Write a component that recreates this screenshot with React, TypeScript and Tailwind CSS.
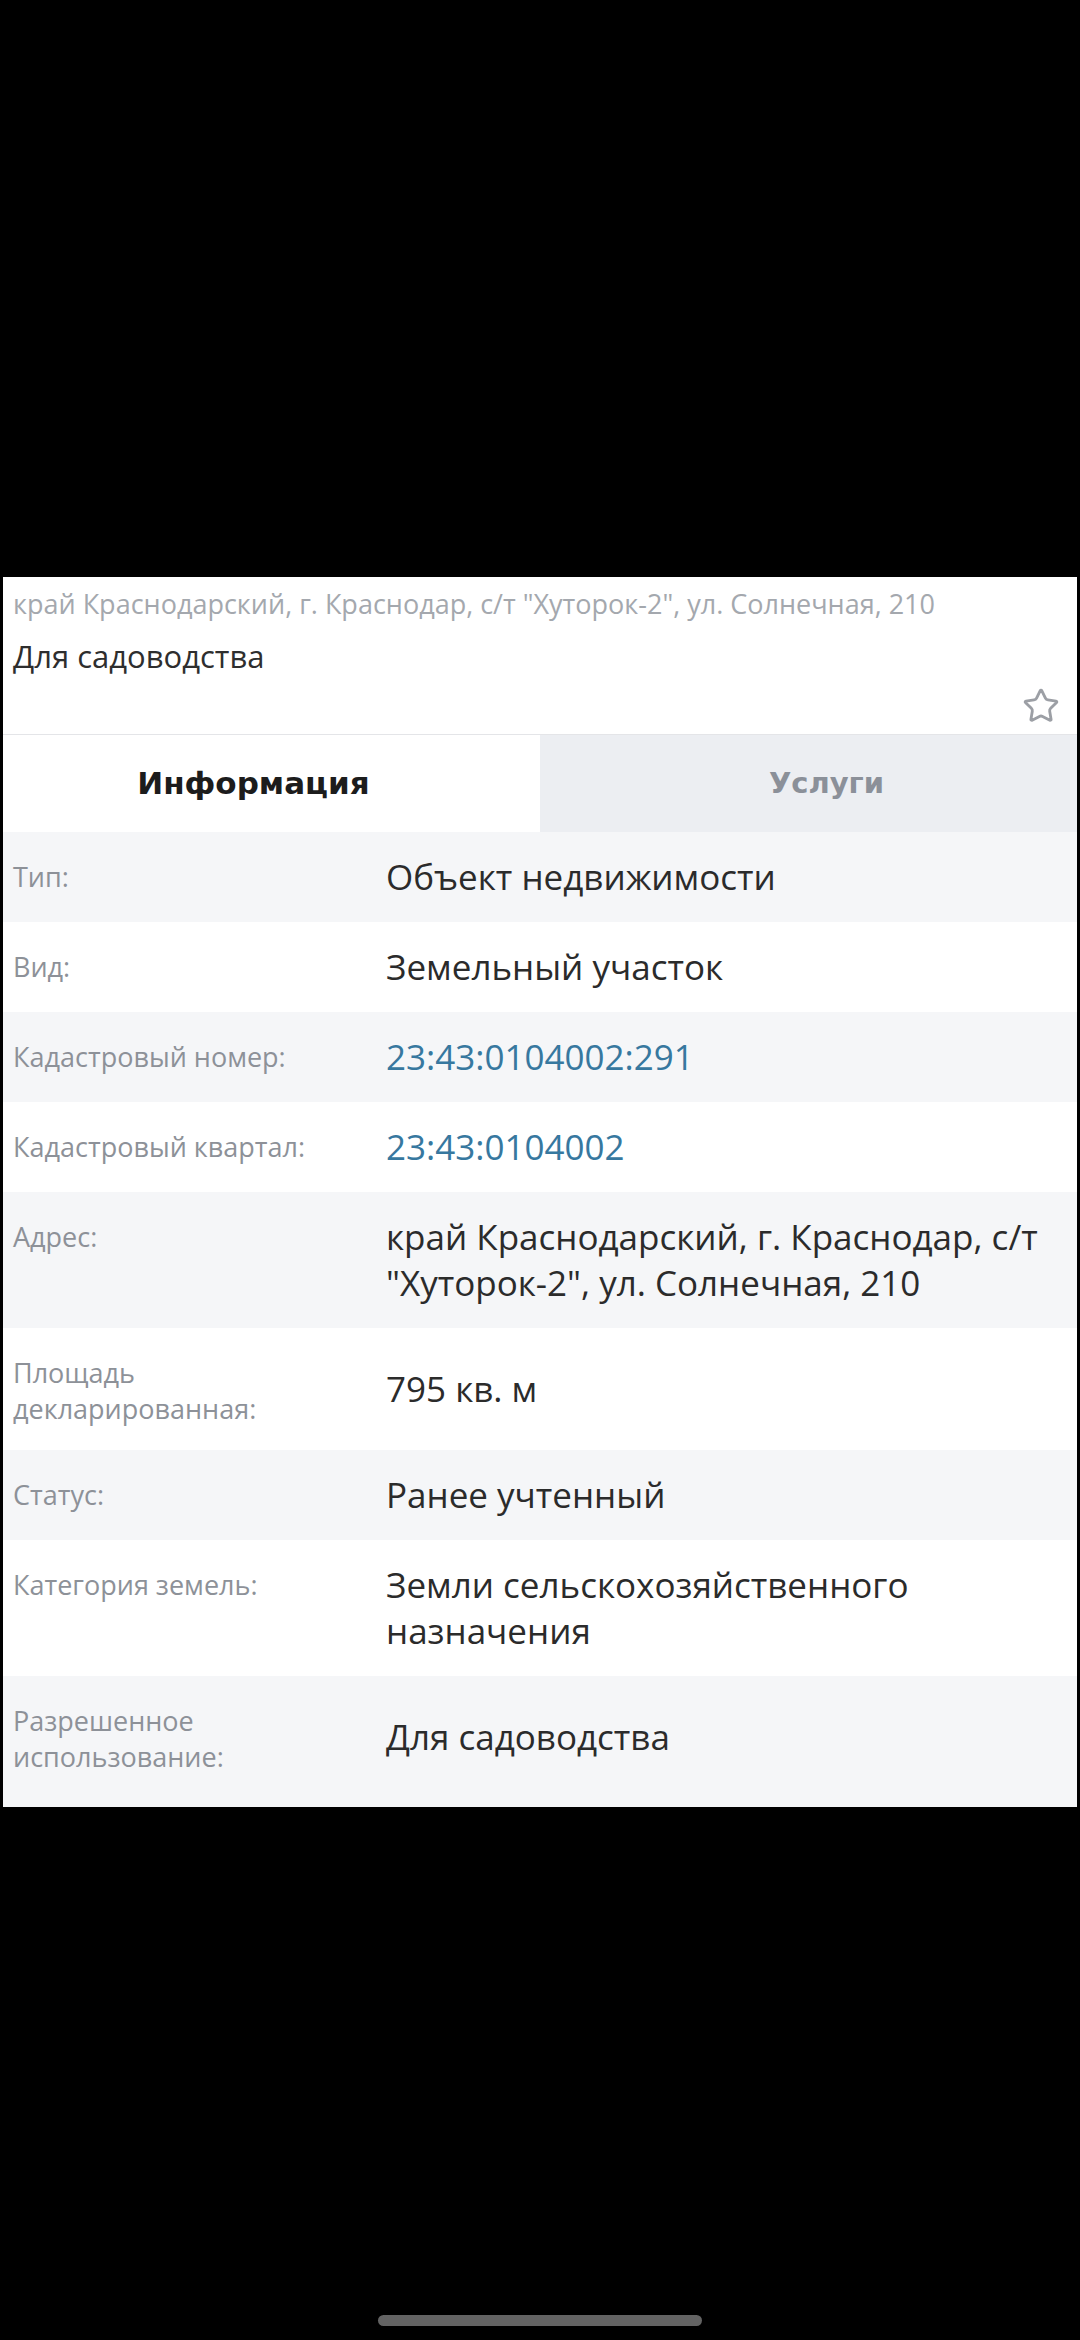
import { Star } from 'lucide-react';

const rows: { label: string; value: string; link?: boolean }[] = [
  { label: 'Тип:', value: 'Объект недвижимости' },
  { label: 'Вид:', value: 'Земельный участок' },
  { label: 'Кадастровый номер:', value: '23:43:0104002:291', link: true },
  { label: 'Кадастровый квартал:', value: '23:43:0104002', link: true },
  { label: 'Адрес:', value: 'край Краснодарский, г. Краснодар, с/т "Хуторок-2", ул. Солнечная, 210' },
  { label: 'Площадь декларированная:', value: '795 кв. м' },
  { label: 'Статус:', value: 'Ранее учтенный' },
  { label: 'Категория земель:', value: 'Земли сельскохозяйственного назначения' },
  { label: 'Разрешенное использование:', value: 'Для садоводства' },
];

const App = () => {
  return (
    <div className="w-[1080px] h-[2340px] bg-black flex flex-col font-['Open_Sans',sans-serif]">
      <div className="h-[577px] shrink-0" />

      {/* Card */}
      <div className="mx-[3px] bg-white">
        {/* Header */}
        <div className="px-[10px] pt-[9px] pb-[9px] border-b border-[#e4e5e8]">
          <p className="text-[27px] leading-[36px] text-[#a4a8ae] whitespace-nowrap">
            край Краснодарский, г. Краснодар, с/т "Хуторок-2", ул. Солнечная, 210
          </p>
          <p className="mt-[14px] text-[31px] leading-[40px] text-[#2e2e2e]">Для садоводства</p>
          <div className="mt-[11px] flex justify-end pr-[7px]">
            <Star size={38} strokeWidth={1.8} className="text-[#9c9fa5]" />
          </div>
        </div>

        {/* Tabs */}
        <div className="grid grid-cols-2 h-[97px]">
          <div className="flex items-center justify-center pr-[36px] bg-white">
            <span className="font-['DejaVu_Sans',sans-serif] font-bold text-[31px] text-[#1c1c1c]">
              Информация
            </span>
          </div>
          <div className="flex items-center justify-center pl-[36px] bg-[#eceef2]">
            <span className="font-['DejaVu_Sans',sans-serif] font-bold text-[29px] text-[#8b9099]">
              Услуги
            </span>
          </div>
        </div>

        {/* Info rows */}
        <div className="flex flex-col">
          {rows.map((r, i) => (
            <div
              key={r.label}
              className={`grid grid-cols-[383px_1fr] ${i % 2 === 0 ? 'bg-[#f5f6f8]' : 'bg-white'} ${
                i === rows.length - 1 ? 'pb-[9px]' : ''
              }`}
            >
              <div className="pl-[10px] pr-[30px] pt-[27px] pb-[23px] text-[27px] leading-[36px] text-[#8d9198]">
                {r.label}
              </div>
              <div
                className={`self-center py-[22px] pr-[22px] text-[35px] leading-[46px] ${
                  r.link ? 'text-[#37789f]' : 'text-[#2b2b2b]'
                }`}
              >
                {r.value}
              </div>
            </div>
          ))}
        </div>
      </div>

      <div className="flex-1" />
      <div className="flex justify-center pb-[14px]">
        <div className="w-[324px] h-[11px] rounded-full bg-[#636363]" />
      </div>
    </div>
  );
};

export default App;
